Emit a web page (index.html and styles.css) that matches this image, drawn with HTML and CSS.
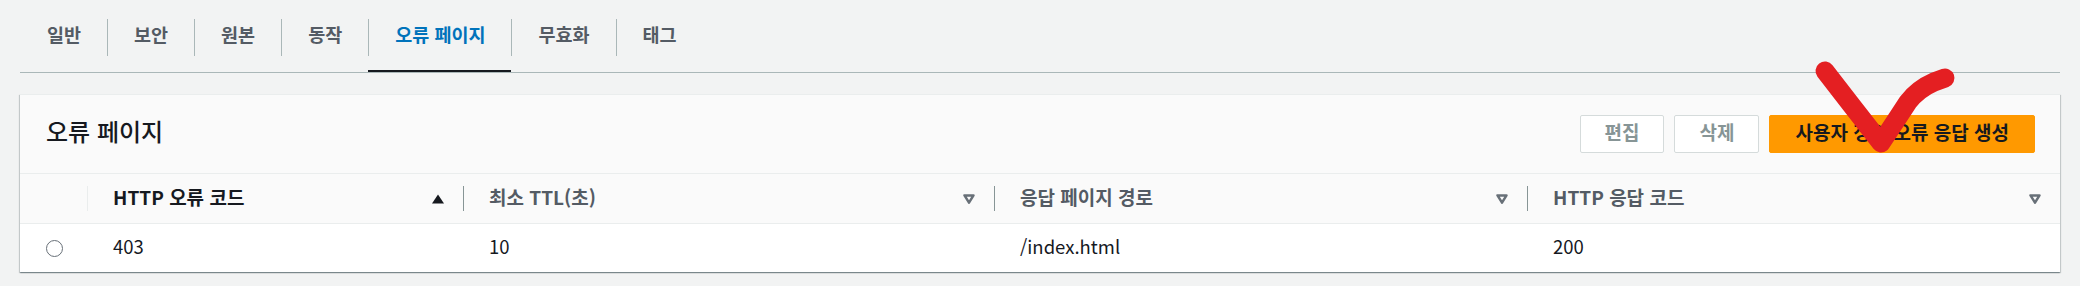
FILE: index.html
```html
<!DOCTYPE html>
<html lang="ko">
<head>
<meta charset="utf-8">
<title>오류 페이지</title>
<link rel="stylesheet" href="styles.css">
</head>
<body>
<div class="page">
  <nav class="tabs">
    <div class="tab"><span class="tab-label first">일반</span></div>
    <div class="tab"><span class="tab-label">보안</span></div>
    <div class="tab"><span class="tab-label">원본</span></div>
    <div class="tab"><span class="tab-label">동작</span></div>
    <div class="tab active"><span class="tab-label">오류 페이지</span></div>
    <div class="tab"><span class="tab-label">무효화</span></div>
    <div class="tab"><span class="tab-label">태그</span></div>
  </nav>

  <section class="panel">
    <header class="panel-header">
      <h2 class="panel-title">오류 페이지</h2>
      <div class="actions">
        <button class="btn">편집</button>
        <button class="btn">삭제</button>
        <button class="btn btn-primary">사용자 정의 오류 응답 생성</button>
      </div>
    </header>

    <div class="table">
      <div class="row head">
        <div class="cell sel"></div>
        <div class="cell th">
          <span class="sep light"></span>
          <span class="label sorted">HTTP 오류 코드</span>
          <svg class="sort" viewBox="0 0 12 10" width="12" height="10"><polygon points="0,9.5 12,9.5 6,0.5" fill="#16191f"/></svg>
        </div>
        <div class="cell th">
          <span class="sep"></span>
          <span class="label">최소 TTL(초)</span>
          <svg class="sort" viewBox="0 0 12 10" width="12" height="10"><polygon points="1.5,1.4 10.5,1.4 6,8.6" fill="none" stroke="#687078" stroke-width="2.5" stroke-linejoin="round"/></svg>
        </div>
        <div class="cell th">
          <span class="sep"></span>
          <span class="label">응답 페이지 경로</span>
          <svg class="sort" viewBox="0 0 12 10" width="12" height="10"><polygon points="1.5,1.4 10.5,1.4 6,8.6" fill="none" stroke="#687078" stroke-width="2.5" stroke-linejoin="round"/></svg>
        </div>
        <div class="cell th">
          <span class="sep"></span>
          <span class="label">HTTP 응답 코드</span>
          <svg class="sort" viewBox="0 0 12 10" width="12" height="10"><polygon points="1.5,1.4 10.5,1.4 6,8.6" fill="none" stroke="#687078" stroke-width="2.5" stroke-linejoin="round"/></svg>
        </div>
      </div>
      <div class="row data">
        <div class="cell sel"><span class="radio"></span></div>
        <div class="cell td"><span class="val">403</span></div>
        <div class="cell td"><span class="val">10</span></div>
        <div class="cell td"><span class="val">/index.html</span></div>
        <div class="cell td"><span class="val">200</span></div>
      </div>
    </div>
  </section>
</div>

<svg class="annotation" width="2080" height="286" viewBox="0 0 2080 286">
  <path d="M1825 71 Q1852 106 1881 143 Q1895 122 1908 102 Q1918 89 1934 82 L1945 78" fill="none" stroke="#e41f22" stroke-width="19" stroke-linecap="round" stroke-linejoin="round"/>
</svg>
</body>
</html>
```

FILE: styles.css
```css
* { box-sizing: border-box; }

body {
  margin: 0;
  position: relative;
  background: #f2f3f3;
  font-family: "Noto Sans CJK KR", sans-serif;
  color: #16191f;
  width: 2080px;
  height: 286px;
  overflow: hidden;
}

.page {
  padding: 0 20px;
}

/* Tabs */
.tabs {
  display: flex;
  padding-top: 19px;
  border-bottom: 1px solid #aab7b8;
}

.tab {
  height: 53px;
}

.tab.active {
  box-shadow: inset 0 -2px 0 #16191f;
}

.tab-label {
  display: block;
  height: 37px;
  line-height: 31px;
  padding: 0 26px;
  border-left: 1px solid #aab7b8;
  font-size: 18.5px;
  font-weight: 700;
  color: #545b64;
  white-space: nowrap;
}

.tab-label.first {
  border-left: 0;
  padding-left: 27px;
}

.tab.active .tab-label {
  color: #0073bb;
}

/* Panel */
.panel {
  margin-top: 21px;
  background: #fff;
  border-top: 1px solid #eaeded;
  box-shadow: 0 1px 1px 0 rgba(0, 28, 36, 0.3),
              1px 1px 1px 0 rgba(0, 28, 36, 0.15),
              -1px 1px 1px 0 rgba(0, 28, 36, 0.15);
}

.panel-header {
  display: flex;
  align-items: center;
  justify-content: space-between;
  height: 79px;
  padding: 0 25px 0 26px;
  background: #fafafa;
  border-bottom: 1px solid #eaeded;
}

.panel-title {
  margin: 0 0 6px 0;
  font-size: 24px;
  font-weight: 500;
  line-height: 32px;
  color: #16191f;
}

.actions {
  display: flex;
  gap: 10px;
}

.btn {
  height: 38px;
  padding: 0 24px 4px;
  border: 1px solid #d5dbdb;
  border-radius: 2px;
  background: #fff;
  font-family: inherit;
  font-size: 19px;
  font-weight: 700;
  line-height: 32px;
  color: #879596;
  white-space: nowrap;
}

.btn-primary {
  padding: 0 25px 4px;
  background: #ff9900;
  border-color: #ff9900;
  color: #16191f;
}

/* Table */
.row {
  display: grid;
  grid-template-columns: 67px 376px 531px 533px 533px;
}

.row.head {
  height: 50px;
  background: #fafafa;
  border-bottom: 1px solid #eaeded;
}

.row.data {
  height: 48px;
}

.cell {
  display: flex;
  align-items: center;
}

.th {
  padding-right: 19px;
}

.sep {
  width: 1px;
  height: 25px;
  background: #879596;
  flex: none;
}

.sep.light {
  background: #eaeded;
}

.label {
  margin-left: 25px;
  margin-bottom: 4px;
  font-size: 19px;
  font-weight: 700;
  color: #545b64;
  white-space: nowrap;
}

.label.sorted {
  color: #16191f;
}

.sort {
  margin-left: auto;
  flex: none;
  display: block;
}

.td {
  padding-left: 26px;
}

.val {
  margin-bottom: 4px;
  font-size: 18.5px;
  color: #16191f;
}

.sel {
  padding-left: 26px;
}

.radio {
  width: 17px;
  height: 17px;
  border: 1.5px solid #687078;
  border-radius: 50%;
  background: #fff;
}

/* Hand-drawn annotation over the page */
.annotation {
  position: absolute;
  top: 0;
  left: 0;
  pointer-events: none;
}
```
